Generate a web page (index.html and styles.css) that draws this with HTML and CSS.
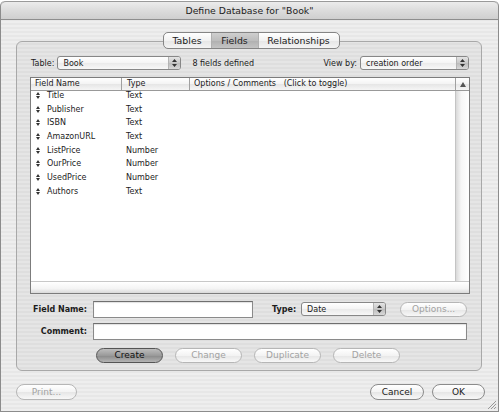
FILE: index.html
```html
<!DOCTYPE html>
<html lang="en">
<head>
    <meta charset="UTF-8">
    <title>Define Database</title>
    <link rel="stylesheet" href="styles.css">
</head>
<body>
<div class="window">
    <div class="titlebar">Define Database for "Book"</div>

    <div class="content">
        <div class="tabs">
            <span class="tab tab-tables">Tables</span>
            <span class="tab tab-fields active">Fields</span>
            <span class="tab tab-rel">Relationships</span>
        </div>

        <div class="panel">
            <div class="toprow">
                <span class="lbl">Table:</span>
                <div class="popup popup-table">
                    <span class="popup-text">Book</span>
                    <span class="stepper"><svg width="5" height="8" viewBox="0 0 5 8"><path d="M2.5 0L5 3H0Z M2.5 8L5 5H0Z" fill="#333"/></svg></span>
                </div>
                <span class="count">8 fields defined</span>
                <span class="grow"></span>
                <span class="lbl">View by:</span>
                <div class="popup popup-view">
                    <span class="popup-text">creation order</span>
                    <span class="stepper"><svg width="5" height="8" viewBox="0 0 5 8"><path d="M2.5 0L5 3H0Z M2.5 8L5 5H0Z" fill="#333"/></svg></span>
                </div>
            </div>

            <div class="list">
                <div class="list-head">
                    <div class="hcell c1">Field Name</div>
                    <div class="hcell c2">Type</div>
                    <div class="hcell c3">Options / Comments &nbsp;&nbsp;(Click to toggle)</div>
                    <div class="hcell c4"><svg width="6" height="5" viewBox="0 0 6 5"><path d="M3 0L6 5H0Z" fill="#555"/></svg></div>
                </div>
                <div class="list-body">
                    <div class="rows" id="rows"></div>
                    <div class="vscroll"></div>
                </div>
                <div class="hscroll"></div>
            </div>

            <div class="formrow">
                <span class="flabel">Field Name:</span>
                <span class="input input-name"></span>
                <span class="flabel type-lbl">Type:</span>
                <div class="popup popup-type">
                    <span class="popup-text">Date</span>
                    <span class="stepper"><svg width="5" height="8" viewBox="0 0 5 8"><path d="M2.5 0L5 3H0Z M2.5 8L5 5H0Z" fill="#333"/></svg></span>
                </div>
                <button class="btn disabled btn-options">Options...</button>
            </div>

            <div class="formrow comment-row">
                <span class="flabel">Comment:</span>
                <span class="input input-comment"></span>
            </div>

            <div class="actions">
                <button class="btn default">Create</button>
                <button class="btn disabled">Change</button>
                <button class="btn disabled">Duplicate</button>
                <button class="btn disabled">Delete</button>
            </div>
        </div>

        <div class="footer">
            <button class="btn disabled btn-print">Print...</button>
            <span class="grow"></span>
            <button class="btn btn-cancel">Cancel</button>
            <button class="btn btn-ok">OK</button>
        </div>
    </div>

    <svg class="grip" width="11" height="11" viewBox="0 0 11 11">
        <path d="M10 2L2 10 M10 5L5 10 M10 8L8 10" stroke="#999" stroke-width="1"/>
    </svg>
</div>

<script>
    // field list
    var fields = [
        ["Title", "Text"],
        ["Publisher", "Text"],
        ["ISBN", "Text"],
        ["AmazonURL", "Text"],
        ["ListPrice", "Number"],
        ["OurPrice", "Number"],
        ["UsedPrice", "Number"],
        ["Authors", "Text"]
    ];

    var rows = document.getElementById("rows");
    var handle = '<svg width="4" height="7" viewBox="0 0 4 7"><path d="M2 0L4 3H0Z M2 7L4 4H0Z" fill="#333"/></svg>';

    for (var i = 0; i < fields.length; i++) {
        var row = document.createElement("div");
        row.className = "row";
        row.innerHTML = '<span class="cell c1"><span class="handle">' + handle + '</span>' + fields[i][0] + '</span>'
            + '<span class="cell c2">' + fields[i][1] + '</span>';
        rows.appendChild(row);
    }
</script>
</body>
</html>
```

FILE: styles.css
```css
body {
    margin: 0;
    width: 500px;
    height: 413px;
    overflow: hidden;
    background: #ffffff;
    font-family: "DejaVu Sans", sans-serif;
    color: #1c1c1c;
}

.window {
    position: relative;
    margin-top: 1px;
    width: 497px;
    height: 410px;
    border: 1px solid #8c8c8c;
    border-top: none;
    border-radius: 5px 5px 0 0;
    background: repeating-linear-gradient(to bottom, #eeeeee 0, #eeeeee 2px, #e7e7e7 2px, #e7e7e7 4px);
    display: flex;
    flex-direction: column;
}

.titlebar {
    height: 17px;
    line-height: 17px;
    text-align: center;
    font-size: 9.3px;
    color: #222;
    border-top: 1px solid #9a9a9a;
    border-bottom: 1px solid #8e8e8e;
    border-radius: 5px 5px 0 0;
    background: linear-gradient(#ececec, #dcdcdc 50%, #cfcfcf);
}

.content {
    display: flex;
    flex-direction: column;
}

/* tabs */
.tabs {
    position: relative;
    z-index: 1;
    align-self: center;
    margin-top: 12px;
    margin-left: 3px;
    display: flex;
    height: 15px;
    border: 1px solid #858585;
    border-radius: 5px;
    overflow: hidden;
    background: linear-gradient(#ffffff, #f2f2f2 50%, #e6e6e6 52%, #f4f4f4);
    font-size: 9.4px;
}

.tab {
    line-height: 15px;
    text-align: center;
    border-right: 1px solid #b0b0b0;
}

.tab:last-child {
    border-right: none;
}

.tab-tables { width: 47px; }
.tab-fields { width: 46px; }
.tab-rel { width: 80px; }

.tab.active {
    background: linear-gradient(#cfcfcf, #bdbdbd 50%, #b0b0b0 52%, #c4c4c4);
}

/* group box */
.panel {
    margin: -8px 0 0 15px;
    width: 440px;
    height: 314px;
    padding: 14px 11px 0 13px;
    border: 1px solid #a8a8a8;
    border-radius: 6px;
    background: rgba(0, 0, 0, 0.035);
    display: flex;
    flex-direction: column;
}

.toprow {
    display: flex;
    align-items: center;
    height: 14px;
    font-size: 8px;
}

.lbl {
    margin-left: 1px;
}

.grow {
    flex: 1;
}

.count {
    margin-left: 11px;
}

.popup {
    display: flex;
    align-items: center;
    height: 12px;
    border: 1px solid #878787;
    border-radius: 3px;
    background: linear-gradient(#ffffff, #f4f4f4 50%, #eaeaea 52%, #f8f8f8);
    font-size: 8px;
    overflow: hidden;
}

.popup-text {
    flex: 1;
    padding-left: 5px;
}

.stepper {
    width: 11px;
    height: 12px;
    display: flex;
    align-items: center;
    justify-content: center;
    border-left: 1px solid #b4b4b4;
    background: linear-gradient(#e4e4e4, #c8c8c8 50%, #bcbcbc 52%, #d8d8d8);
}

.popup-table {
    margin-left: 3px;
    width: 122px;
}

.popup-view {
    margin-left: 3px;
    margin-right: 1px;
    width: 107px;
}

/* field list */
.list {
    margin-top: 7px;
    width: 438px;
    height: 215px;
    border: 1px solid #7c7c7c;
    background: #ffffff;
    display: flex;
    flex-direction: column;
    font-size: 8px;
}

.list-head {
    display: flex;
    height: 12px;
    border-bottom: 1px solid #999;
    background: linear-gradient(#ffffff, #f3f3f3 50%, #e6e6e6 52%, #f5f5f5);
}

.hcell {
    line-height: 12px;
    white-space: nowrap;
    overflow: hidden;
    padding-left: 4px;
    box-sizing: border-box;
}

.c1 {
    width: 91px;
    border-right: 1px solid #a0a0a0;
}

.c2 {
    width: 68px;
    padding-left: 5px;
    border-right: 1px solid #a0a0a0;
}

.c3 {
    flex: 1;
}

.c4 {
    width: 14px;
    padding: 0;
    display: flex;
    align-items: center;
    justify-content: center;
    border-left: 1px solid #a0a0a0;
}

.list-body {
    flex: 1;
    display: flex;
}

.rows {
    flex: 1;
}

.row {
    display: flex;
    height: 13.67px;
}

.cell {
    line-height: 9px;
    box-sizing: border-box;
    padding-left: 4px;
    border: none;
    display: flex;
    align-items: center;
    height: 9px;
}

.handle {
    display: inline-flex;
    width: 4px;
    margin: 0 7px 0 1px;
}

.vscroll {
    width: 13px;
    border-left: 1px solid #c4c4c4;
    background: linear-gradient(to right, #d9d9d9, #f6f6f6 40%, #ffffff);
}

.hscroll {
    height: 11px;
    border-top: 1px solid #c8c8c8;
    background: linear-gradient(#ffffff, #f4f4f4 60%, #dadada);
}

/* form */
.formrow {
    display: flex;
    align-items: center;
    height: 16px;
    margin-top: 7px;
}

.comment-row {
    margin-top: 6px;
}

.flabel {
    width: 57px;
    text-align: right;
    font-size: 8px;
    font-weight: bold;
}

.type-lbl {
    width: auto;
    margin-left: 19px;
}

.input {
    margin-left: 6px;
    height: 15px;
    border: 1px solid #8a8a8a;
    border-top-color: #6f6f6f;
    background: #ffffff;
    box-shadow: inset 0 1px 1px rgba(0, 0, 0, 0.12);
}

.input-name {
    width: 158px;
}

.input-comment {
    width: 372px;
}

.popup-type {
    margin-left: 5px;
    width: 83px;
}

.btn {
    height: 15px;
    padding: 0;
    border: 1px solid #8b8b8b;
    border-radius: 8px;
    background: linear-gradient(#ffffff, #f3f3f3 50%, #e6e6e6 52%, #f8f8f8);
    font-family: "DejaVu Sans", sans-serif;
    font-size: 9px;
    color: #1c1c1c;
    line-height: 13px;
}

.btn.disabled {
    color: #a2a2a2;
    border-color: #b6b6b6;
}

.btn.default {
    border-color: #555;
    background: linear-gradient(#bdbdbd, #9a9a9a 50%, #8a8a8a 52%, #b4b4b4);
    color: #111;
}

.btn-options {
    margin-left: 14px;
    width: 67px;
}

.actions {
    display: flex;
    gap: 12px;
    margin: 9px 0 0 66px;
}

.actions .btn {
    width: 67px;
}

.footer {
    display: flex;
    margin: 13px 13px 0 15px;
}

.btn-print {
    width: 61px;
    height: 16px;
}

.btn-cancel {
    width: 54px;
    height: 16px;
}

.btn-ok {
    width: 53px;
    height: 16px;
    margin-left: 8px;
}

.grip {
    position: absolute;
    right: 1px;
    bottom: 1px;
}
```
